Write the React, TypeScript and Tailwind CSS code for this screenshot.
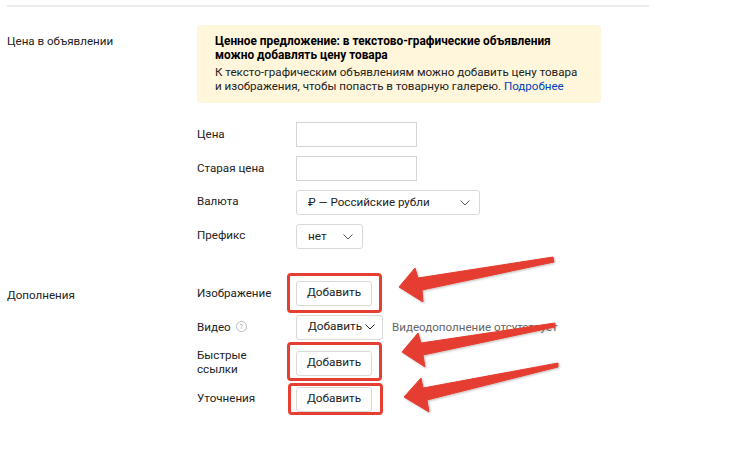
import React from "react";

const Chevron = ({ className = "", color = "#555" }: { className?: string; color?: string }) => (
  <svg width="10" height="6" viewBox="0 0 10 6" fill="none" stroke={color} strokeWidth="1" className={className}>
    <path d="M0.5 0.5 L5 5 L9.5 0.5" />
  </svg>
);

const Row = ({ label, children, up = false }: { label: React.ReactNode; children: React.ReactNode; up?: boolean }) => (
  <div className="flex items-center h-[25px]">
    <div className={`w-[99px] leading-[14px] ${up ? "-mt-[4px]" : "-mt-[2px]"}`}>{label}</div>
    {children}
  </div>
);

const Input = () => <div className="w-[121px] h-[25px] border border-[#d4d4d4]" />;

const AddButton = () => (
  <button className="w-[76px] h-[25px] border border-[#d9d9d9] rounded-[3px] text-[#222] bg-white pb-[1px] text-[11.8px]">Добавить</button>
);

const Box = ({ className }: { className: string }) => (
  <div className={`absolute border-[3px] border-[#e53f33] rounded-[4px] ${className}`} />
);

const Arrow = ({ points }: { points: string }) => (
  <polygon points={points} fill="#e53d30" stroke="#e53d30" strokeWidth="1" strokeLinejoin="round" filter="url(#sh)" />
);

export default function App() {
  return (
    <div
      className="relative w-[735px] h-[450px] overflow-hidden bg-white text-[11.6px] text-[#222]"
      style={{ fontFamily: 'Roboto, "Noto Sans", sans-serif' }}
    >
      <div className="ml-[7px] mt-[5px] w-[642px] border-t-2 border-[#ececec] pt-[18px]">
        <div className="flex">
          <div className="w-[190px] pt-[9px] leading-[14px]">Цена в объявлении</div>
          <div>
            <div className="w-[404px] h-[78px] bg-[#fff6db] rounded-[3px] pl-[18px] pt-[9px] leading-[14px]">
              <div className="font-bold text-black text-[11.85px]">
                Ценное предложение: в текстово-графические объявления
                <br />
                можно добавлять цену товара
              </div>
              <div className="mt-[3px]">
                К тексто-графическим объявлениям можно добавить цену товара
                <br />
                и изображения, чтобы попасть в товарную галерею. <span className="text-[#0044bb]">Подробнее</span>
              </div>
            </div>
            <div className="mt-[19px] flex flex-col gap-[9px]">
              <Row label="Цена"><Input /></Row>
              <Row label="Старая цена"><Input /></Row>
              <Row label="Валюта" up>
                <div className="w-[184px] h-[25px] border border-[#d9d9d9] rounded-[3px] flex items-center justify-between pl-[11px] pr-[9px] text-[11.6px]">
                  <span>₽ — Российские рубли</span>
                  <Chevron />
                </div>
              </Row>
              <Row label="Префикс" up>
                <div className="w-[67px] h-[25px] border border-[#d9d9d9] rounded-[3px] flex items-center justify-between pl-[11px] pr-[9px] text-[11.8px]">
                  <span>нет</span>
                  <Chevron />
                </div>
              </Row>
            </div>
          </div>
        </div>
        <div className="flex mt-[32px]">
          <div className="w-[190px] pt-[5px] leading-[18px]">Дополнения</div>
          <div className="flex flex-col">
            <Row label="Изображение"><AddButton /></Row>
            <div className="mt-[9px]">
              <Row
                label={
                  <span className="flex items-center gap-[5px]">
                    Видео
                    <span className="w-[11px] h-[11px] rounded-full border border-[#bbb] text-[#aaa] text-[8px] leading-[9px] text-center">?</span>
                  </span>
                }
              >
                <div className="w-[87px] h-[25px] border border-[#d9d9d9] rounded-[3px] flex items-center pl-[11px] gap-[3px] text-[11.8px] pb-[1px]">
                  <span>Добавить</span>
                  <Chevron color="#222" />
                </div>
                <span className="ml-[9px] text-[#666]">Видеодополнение отсутствует</span>
              </Row>
            </div>
            <div className="mt-[11px]">
              <Row up label={<>Быстрые<br />ссылки</>}><AddButton /></Row>
            </div>
            <div className="mt-[11px]">
              <Row up label="Уточнения"><AddButton /></Row>
            </div>
          </div>
        </div>
      </div>

      <Box className="left-[287px] top-[273px] w-[95px] h-[40px]" />
      <Box className="left-[287px] top-[342px] w-[95px] h-[39px]" />
      <Box className="left-[288px] top-[383px] w-[95px] h-[32px]" />

      <svg className="absolute left-0 top-0" width="735" height="450" viewBox="0 0 735 450">
        <defs>
          <filter id="sh" x="-10%" y="-20%" width="120%" height="140%">
            <feDropShadow dx="1" dy="1" stdDeviation="1" floodColor="#000" floodOpacity="0.25" />
          </filter>
        </defs>
        <Arrow points="399,287 415,268 418,278 553,257 554,262 422,290 423,302" />
        <Arrow points="402,352 418,333 421,343 555,323 555,327 423,355 425,367" />
        <Arrow points="404,397 421,378 423,388 558,363 558,367 427,400 429,412" />
      </svg>
    </div>
  );
}
